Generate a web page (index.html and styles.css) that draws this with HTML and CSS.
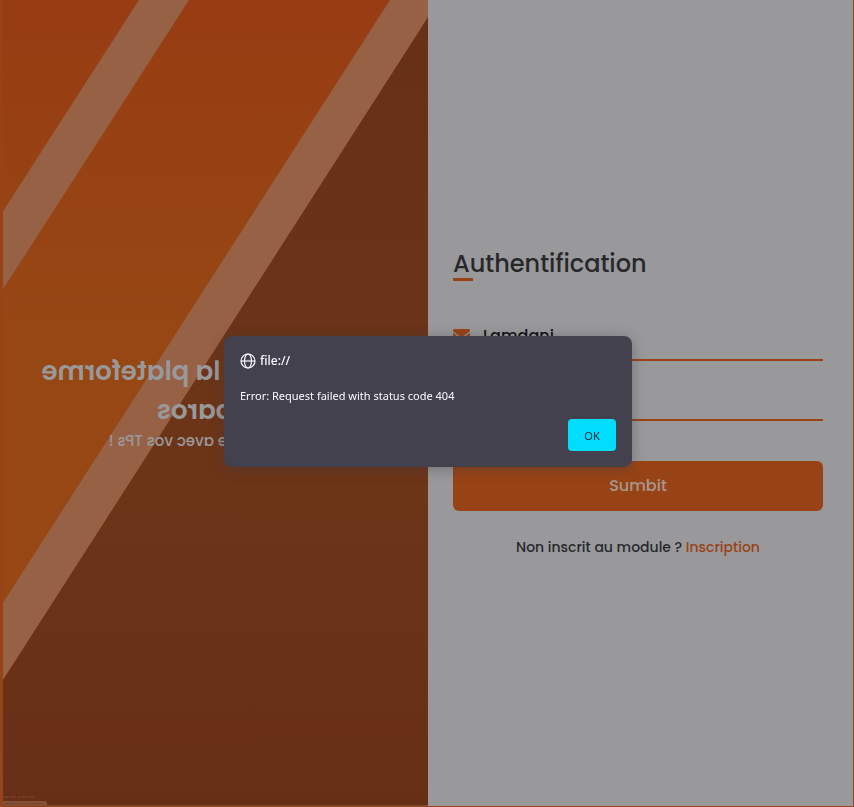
FILE: index.html
```html
<!DOCTYPE html>
<html lang="fr">
<head>
<meta charset="utf-8">
<meta name="viewport" content="width=device-width, initial-scale=1">
<title>Authentification</title>
<link rel="stylesheet" href="styles.css">
</head>
<body>
<main class="page">
  <section class="cover">
    <svg class="cover-art" viewBox="0 0 425 805" preserveAspectRatio="none" aria-hidden="true">
      <defs>
        <linearGradient id="warm" x1="0" y1="0" x2="0" y2="1">
          <stop offset="0" stop-color="#983c13"/>
          <stop offset="0.4" stop-color="#964714"/>
          <stop offset="1" stop-color="#974814"/>
        </linearGradient>
        <linearGradient id="dark" x1="0" y1="0" x2="0" y2="1">
          <stop offset="0" stop-color="#673117"/>
          <stop offset="0.55" stop-color="#6d3518"/>
          <stop offset="1" stop-color="#682f17"/>
        </linearGradient>
      </defs>
      <rect width="425" height="805" fill="url(#warm)"/>
      <path d="M425 17V805H0V679Z" fill="url(#dark)"/>
      <path d="M136 0H186L0 289V211ZM387 0H425V17L0 679V602Z" fill="#976146"/>
      <path d="M0 800H42Q44 800 44 802V804H0Z" fill="#86513a"/>
      <path d="M0 796H33" stroke="#7c4a32" stroke-dasharray="5 1 7 2 3 1"/>
      <path d="M2 802.500H42" stroke="#744129" stroke-dasharray="3 1 5 1 2 1"/>
      <path d="M0 804.500H425" stroke="#7e4a30"/>
    </svg>
    <div class="cover-text">
      <p class="cover-title">Bienvenue à la plateforme<br>na paros</p>
      <p class="cover-sub">Restez à l'aise avec vos TPs !</p>
    </div>
  </section>
  <section class="panel">
    <h1 class="title">Authentification</h1>
    <form class="form">
      <label class="field">
        <svg class="field-icon" viewBox="0 0 512 384" aria-hidden="true">
          <path d="M48 0C22 0 0 22 0 48c0 15 7 29 19 38l218 163c11 9 27 9 38 0L493 86c12-9 19-23 19-38 0-26-22-48-48-48ZM0 112v208c0 35 29 64 64 64h384c35 0 64-29 64-64V112L294 275c-23 17-53 17-76 0Z"/>
        </svg>
        <input class="field-input" type="text" value="Lamdani" aria-label="Identifiant">
      </label>
      <label class="field">
        <input class="field-input" type="password" aria-label="Mot de passe">
      </label>
      <button class="submit" type="button">Sumbit</button>
      <p class="signup">Non inscrit au module ? <a href="#">Inscription</a></p>
    </form>
  </section>
</main>
<div class="overlay">
  <div class="dialog" role="alertdialog" aria-labelledby="origin" aria-describedby="message">
    <div class="origin">
      <svg class="globe" viewBox="0 0 16 16" aria-hidden="true">
        <circle cx="8" cy="8" r="7"/>
        <ellipse cx="8" cy="8" rx="3.500" ry="7"/>
        <path d="M1 8H15"/>
      </svg>
      <span id="origin">file://</span>
    </div>
    <p class="message" id="message">Error: Request failed with status code 404</p>
    <button class="ok" type="button">OK</button>
  </div>
</div>
</body>
</html>
```
FILE: styles.css
```css
:root {
  --orange: #984316;
  --grey: #99999b;
  --ink: #28282b;
}

* {
  box-sizing: border-box;
  margin: 0;
}

body {
  background: var(--orange);
  font-family: Poppins, Inter, sans-serif;
  font-weight: 500;
}

.page {
  display: grid;
  grid-template-columns: 1fr 1fr;
  min-height: 100vh;
  padding: 0 1px 1px 3px;
}

.cover {
  display: grid;
  min-width: 0;
}

.cover-art,
.cover-text {
  grid-area: 1 / 1;
  width: 100%;
  height: 100%;
}

.cover-art {
  display: block;
}

.cover-text {
  display: flex;
  flex-direction: column;
  justify-content: center;
  padding-bottom: 2px;
  color: #99999b;
  text-align: center;
  transform: scaleX(-1);
}

.cover-title {
  font-size: 26px;
  font-weight: 600;
  line-height: 39px;
}

.cover-sub {
  font-size: 15px;
  line-height: 22px;
}

.panel {
  display: flex;
  flex-direction: column;
  justify-content: center;
  padding: 0 30px 2px 25px;
  background: var(--grey);
}

.title {
  color: var(--ink);
  font-size: 24px;
  font-weight: 500;
  line-height: 36px;
}

.title::after {
  display: block;
  width: 20px;
  height: 3px;
  margin-top: -4px;
  background: var(--orange);
  content: "";
}

.form {
  display: flex;
  flex-direction: column;
  gap: 10px;
  margin-top: 30px;
}

.field {
  display: flex;
  align-items: center;
  gap: 13px;
  height: 50px;
  border-bottom: 2px solid var(--orange);
}

.field-icon {
  width: 17px;
  fill: var(--orange);
}

.field-input {
  flex: 1;
  min-width: 0;
  padding: 0;
  border: 0;
  outline: 0;
  background: none;
  color: #0e0e11;
  font: inherit;
  font-size: 16px;
}

.submit {
  height: 50px;
  margin-top: 30px;
  padding-bottom: 2px;
  border: 0;
  border-radius: 6px;
  background: var(--orange);
  color: #a5998f;
  font: inherit;
  font-size: 16px;
}

.signup {
  margin-top: 15px;
  color: var(--ink);
  font-size: 14px;
  line-height: 22px;
  text-align: center;
}

.signup a {
  color: var(--orange);
  text-decoration: none;
}

.overlay {
  position: fixed;
  inset: 0;
  display: grid;
  place-items: center;
  padding: 0 0 4px 2px;
  font-family: "Segoe UI", "Noto Sans", sans-serif;
  font-size: 11px;
  font-weight: 400;
}

.dialog {
  display: flex;
  flex-direction: column;
  width: 408px;
  max-width: 100%;
  padding: 16px;
  border-radius: 8px;
  background: #42414d;
  box-shadow: 0 2px 14px rgb(58 57 68 / 40%);
  color: #fbfbfe;
}

.origin {
  display: flex;
  align-items: center;
  gap: 4px;
  height: 17px;
  font-size: 12px;
  font-weight: 500;
}

.globe {
  width: 16px;
  height: 16px;
  fill: none;
  stroke: currentColor;
  stroke-width: 1.2;
}

.message {
  margin-top: 18px;
  line-height: 18px;
}

.ok {
  align-self: flex-end;
  width: 48px;
  height: 32px;
  margin-top: 14px;
  border: 0;
  border-radius: 4px;
  background: #00ddff;
  color: #2b2a33;
  font: inherit;
}
```
